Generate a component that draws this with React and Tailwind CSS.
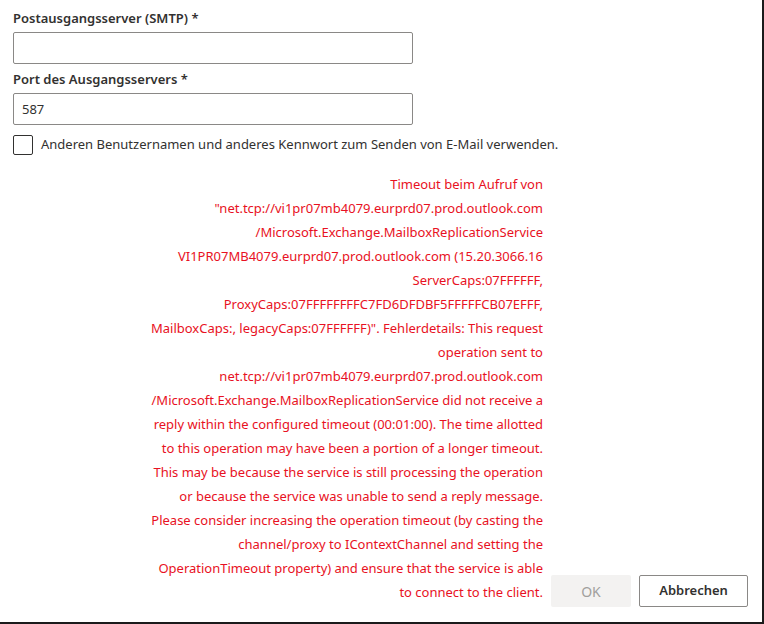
const ERROR_LINES = [
  "Timeout beim Aufruf von",
  "\"net.tcp://vi1pr07mb4079.eurprd07.prod.outlook.com",
  "/Microsoft.Exchange.MailboxReplicationService",
  "VI1PR07MB4079.eurprd07.prod.outlook.com (15.20.3066.16",
  "ServerCaps:07FFFFFF,",
  "ProxyCaps:07FFFFFFFFC7FD6DFDBF5FFFFFCB07EFFF,",
  "MailboxCaps:, legacyCaps:07FFFFFF)\". Fehlerdetails: This request",
  "operation sent to",
  "net.tcp://vi1pr07mb4079.eurprd07.prod.outlook.com",
  "/Microsoft.Exchange.MailboxReplicationService did not receive a",
  "reply within the configured timeout (00:01:00). The time allotted",
  "to this operation may have been a portion of a longer timeout.",
  "This may be because the service is still processing the operation",
  "or because the service was unable to send a reply message.",
  "Please consider increasing the operation timeout (by casting the",
  "channel/proxy to IContextChannel and setting the",
  "OperationTimeout property) and ensure that the service is able",
  "to connect to the client.",
];

export default function App() {
  return (
    <div className="w-[764px] h-[624px] bg-white border-r-2 border-b-2 border-[#1b1b1b] flex flex-col text-[#323130] font-['Noto_Sans',sans-serif]">
      <div className="pl-[13px] pt-[8px] flex flex-col">
        <label className="text-[13px] leading-[20px] font-semibold">Postausgangsserver (SMTP) *</label>
        <input className="mt-[4px] w-[400px] h-[32px] border border-[#8a8886] rounded-[2px] px-[8px] text-[14px] outline-none" />
        <label className="mt-[5px] text-[13px] leading-[20px] font-semibold">Port des Ausgangsservers *</label>
        <input defaultValue="587" className="mt-[4px] w-[400px] h-[32px] border border-[#8a8886] rounded-[2px] px-[8px] text-[13px] text-[#323130] outline-none" />
        <label className="mt-[10px] flex items-center gap-[8px] text-[13px]">
          <span className="w-[20px] h-[20px] border border-[#323130] rounded-[2px] bg-white" />
          <span>Anderen Benutzernamen und anderes Kennwort zum Senden von E-Mail verwenden.</span>
        </label>
      </div>
      <div className="flex-1 flex items-end justify-end pr-[14px] pb-[14px] gap-[8px]">
        <div className="mb-[4px] flex flex-col items-end text-[13px] leading-[24px] text-[#e81123] text-right">
          {ERROR_LINES.map((line, i) => (
            <div key={i} className="whitespace-nowrap">{line}</div>
          ))}
        </div>
        <div className="flex gap-[8px] mb-[1px]">
          <button disabled className="w-[80px] h-[32px] bg-[#f3f2f1] text-[#a19f9d] text-[14px] rounded-[2px]">OK</button>
          <button className="w-[109px] h-[32px] bg-white border border-[#8a8886] text-[#323130] text-[13px] font-semibold rounded-[2px]">Abbrechen</button>
        </div>
      </div>
    </div>
  );
}
